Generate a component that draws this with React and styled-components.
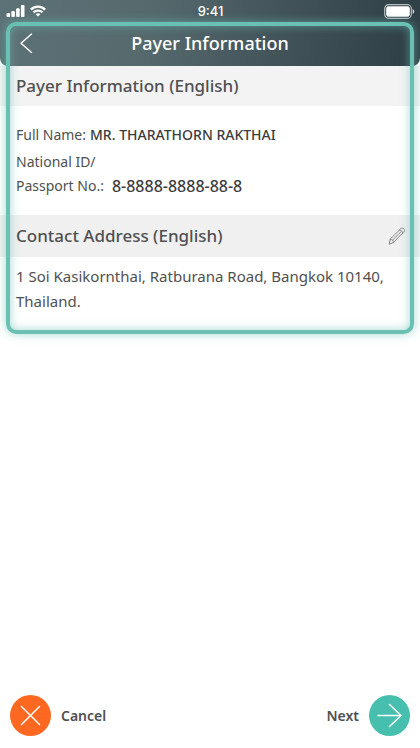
import React from "react";
import styled, { createGlobalStyle } from "styled-components";

const GlobalStyle = createGlobalStyle`
  *, *::before, *::after { box-sizing: border-box; }
  body { margin: 0; background: #fff; }
  button { border: 0; padding: 0; background: none; color: inherit; font: inherit; cursor: pointer; }
  svg { display: block; }
`;

const Screen = styled.div`
  min-height: 100vh;
  display: flex;
  flex-direction: column;
  color: #505050;
  font-family: "Noto Sans", "Open Sans", sans-serif;
  font-size: 14px;
`;

const Highlighted = styled.div`
  position: relative;
  padding-bottom: 20px;
`;

const HighlightFrame = styled.div`
  position: absolute;
  top: 22px;
  right: 6px;
  bottom: 0;
  left: 6px;
  border: 4px solid #69c0b3;
  border-radius: 10px;
  box-shadow: 0 0 10px rgba(105, 192, 179, 0.6), inset 0 0 10px rgba(105, 192, 179, 0.6);
  pointer-events: none;
`;

const Header = styled.header`
  color: #fff;
  background: linear-gradient(100deg, #5d7276 0%, #566a6e 35%, #43545a 65%, #314148 95%);
  border-radius: 0 0 8px 8px;
`;

const StatusBar = styled.div`
  height: 22px;
  padding: 0 5px 0 6px;
  display: grid;
  grid-template-columns: 1fr auto 1fr;
  align-items: center;
`;

const Signals = styled.div`
  display: flex;
  gap: 5px;
`;

const Clock = styled.time`
  font: 500 13px/22px Inter, sans-serif;
`;

const Battery = styled.svg`
  justify-self: end;
`;

const TitleBar = styled.div`
  height: 44px;
  padding: 0 14px 2px;
  display: grid;
  grid-template-columns: 24px 1fr 24px;
  align-items: center;
`;

const IconButton = styled.button`
  width: 24px;
  height: 32px;
  display: flex;
  align-items: center;
  justify-content: ${(p) => p.$align || "center"};
`;

const Title = styled.h1`
  margin: 0;
  text-align: center;
  font-size: 18px;
  line-height: 24px;
  font-weight: 500;
`;

const SectionHeader = styled.div`
  height: ${(p) => (p.$tall ? 42 : 40)}px;
  padding: 0 14px 0 16px;
  display: flex;
  align-items: center;
  justify-content: space-between;
  background: ${(p) => (p.$tall ? "#f0f0f0" : "#f3f3f3")};
`;

const SectionTitle = styled.h2`
  margin: 0;
  font-size: 17px;
  line-height: 24px;
  font-weight: 500;
`;

const Details = styled.dl`
  margin: 0;
  padding: 17px 16px;
`;

const Detail = styled.div`
  display: flex;
  align-items: flex-end;
  gap: ${(p) => p.$gap}px;
  line-height: 24px;
  & + & { margin-top: 3px; }
`;

const Label = styled.dt`
  white-space: pre-line;
`;

const Value = styled.dd`
  margin: 0;
  color: #3c3c3c;
  font-weight: 500;
  font-size: ${(p) => (p.$large ? 16 : 14)}px;
`;

const Address = styled.address`
  padding: 7px 16px 0;
  font-style: normal;
  font-size: 15px;
  line-height: 25px;
`;

const Actions = styled.footer`
  margin-top: auto;
  padding: 12px 10px;
  display: flex;
  justify-content: space-between;
`;

const Action = styled.button`
  display: flex;
  align-items: center;
  gap: 10px;
  font-weight: 600;
  line-height: 20px;
`;

const Disc = styled.span`
  width: 41px;
  height: 41px;
  border-radius: 50%;
  display: grid;
  place-items: center;
  background: ${(p) => p.$color};
`;

const line = { fill: "none", stroke: "currentColor", strokeLinecap: "round", strokeLinejoin: "round" };

export default function App() {
  return (
    <Screen>
      <GlobalStyle />
      <Highlighted>
        <Header>
          <StatusBar>
            <Signals>
              <svg width="19" height="12" viewBox="0 0 19 12" fill="#fff" aria-hidden="true">
                <rect x=".5" y="8" width="3.6" height="4" rx="1" />
                <rect x="5.3" y="6" width="3.6" height="6" rx="1" />
                <rect x="10.1" y="3.2" width="3.6" height="8.8" rx="1" />
                <rect x="14.9" y="0" width="3.6" height="12" rx="1" />
              </svg>
              <svg width="16" height="12" viewBox="0 0 16 12" fill="none" stroke="#fff" strokeWidth="2.2" aria-hidden="true">
                <path d="M.8 4.6C4.9.6 11.1.6 15.2 4.6" />
                <path d="M3.5 7.4c2.5-2.4 6.5-2.4 9 0" />
                <path d="M8 11.6 5.6 9.3c1.3-1.3 3.5-1.3 4.8 0Z" fill="#fff" stroke="none" />
              </svg>
            </Signals>
            <Clock>9:41</Clock>
            <Battery width="31" height="15" viewBox="0 0 31 15" aria-hidden="true">
              <rect x=".7" y=".7" width="26.6" height="13.6" rx="3.8" fill="none" stroke="#fff" strokeOpacity=".65" strokeWidth="1.2" />
              <rect x="2.2" y="2.2" width="23.6" height="10.6" rx="2.3" fill="#fff" />
              <path d="M28.6 5.2c2.2.7 2.2 3.9 0 4.6Z" fill="#fff" fillOpacity=".8" />
            </Battery>
          </StatusBar>
          <TitleBar>
            <IconButton type="button" aria-label="Back">
              <svg width="14" height="22" viewBox="0 0 14 22" {...line} strokeWidth="1.4">
                <path d="M12.5 2 2 11.2l10.5 9.3" />
              </svg>
            </IconButton>
            <Title>Payer Information</Title>
          </TitleBar>
        </Header>
        <SectionHeader>
          <SectionTitle>Payer Information (English)</SectionTitle>
        </SectionHeader>
        <Details>
          <Detail $gap={4}>
            <Label>Full Name:</Label>
            <Value>MR. THARATHORN RAKTHAI</Value>
          </Detail>
          <Detail $gap={8}>
            <Label>{"National ID/\nPassport No.:"}</Label>
            <Value $large>8-8888-8888-88-8</Value>
          </Detail>
        </Details>
        <SectionHeader $tall>
          <SectionTitle>Contact Address (English)</SectionTitle>
          <IconButton type="button" aria-label="Edit contact address" $align="flex-end">
            <svg width="18" height="18" viewBox="0 0 18 18" {...line} stroke="#858585" strokeWidth="1">
              <path d="M1.2 16.8 2.2 12.2 12.9 1.6c2-1.6 4.7 1 3.2 3L5.5 15.4Z" />
              <path d="M2.2 12.2c1.9-.1 3.4 1.3 3.3 3.2M11.5 3c1.7.1 3.1 1.5 3.2 3.2M4.6 13.1l8.5-8.5" />
            </svg>
          </IconButton>
        </SectionHeader>
        <Address>1 Soi Kasikornthai, Ratburana Road, Bangkok 10140, Thailand.</Address>
        <HighlightFrame />
      </Highlighted>
      <Actions>
        <Action type="button">
          <Disc $color="#ff6820">
            <svg width="21" height="21" viewBox="0 0 21 21" {...line} stroke="#fff" strokeWidth="1.5" aria-hidden="true">
              <path d="m1.5 1.5 18 18m0-18-18 18" />
            </svg>
          </Disc>
          Cancel
        </Action>
        <Action type="button">
          Next
          <Disc $color="#46bfae">
            <svg width="25" height="25" viewBox="0 0 25 25" {...line} stroke="#fff" strokeWidth="1.5" aria-hidden="true">
              <path d="M1 12.5h23M12.5 1.5l11.500 11-11.500 11" />
            </svg>
          </Disc>
        </Action>
      </Actions>
    </Screen>
  );
}
